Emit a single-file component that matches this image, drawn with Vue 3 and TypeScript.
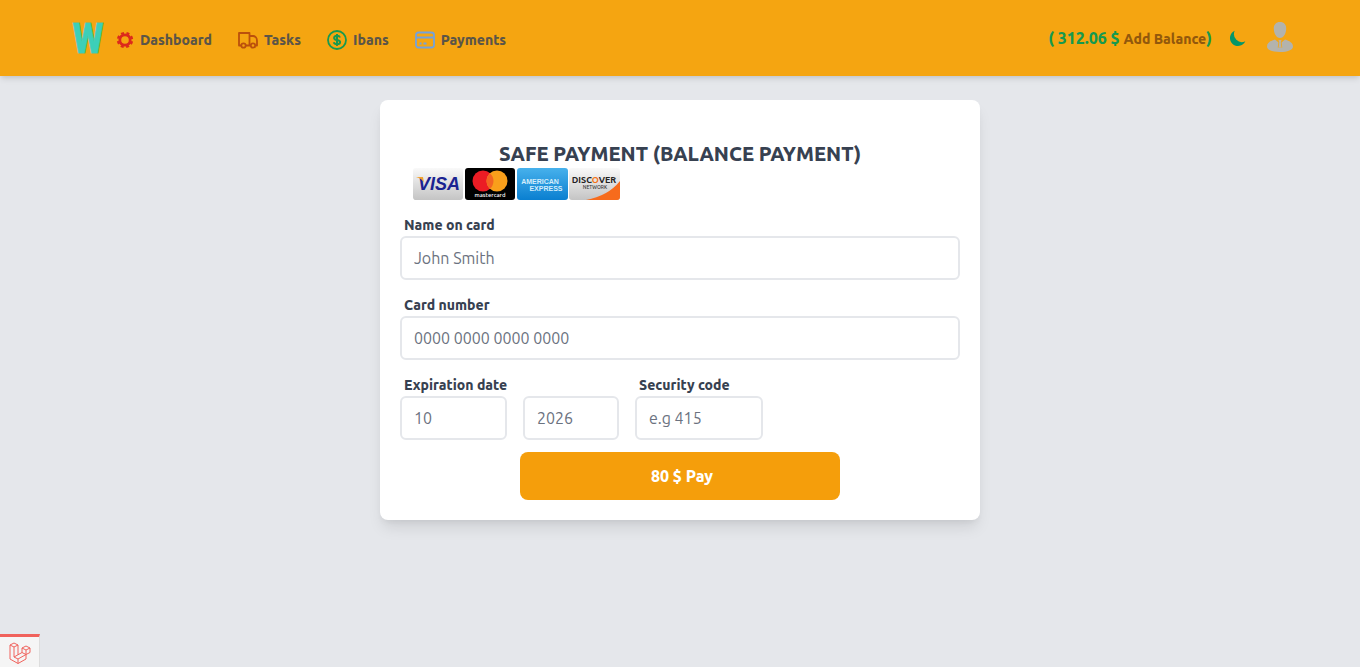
<script setup lang="ts">
import { ref } from 'vue'

const cardName = ref('')
const cardNumber = ref('')
const month = ref('')
const year = ref('')
const code = ref('')
</script>

<template>
  <div class="page">
    <header class="bar">
      <nav class="nav">
        <a href="#" class="logo" aria-label="Home">
          <svg width="32" height="52" viewBox="0 0 32 52">
            <text x="16" y="39" text-anchor="middle">W</text>
          </svg>
        </a>
        <a href="#" class="item">
          <svg width="18" height="18" viewBox="0 0 18 18" fill="none" stroke="#dc2a1c">
            <circle cx="9" cy="9" r="5.2" stroke-width="2.8" />
            <circle cx="9" cy="9" r="7.1" stroke-width="2.2" stroke-dasharray="3 2.576" stroke-dashoffset="-1.3" />
          </svg>
          <span>Dashboard</span>
        </a>
        <a href="#" class="item">
          <svg width="20" height="20" viewBox="0 0 20 20" fill="none" stroke="#bb500c" stroke-width="1.8" stroke-linejoin="round">
            <path d="M3.200 15.500H1V3h10.500v12.500H8M11.500 6h3.700c2.400 0 3.800 2.500 3.800 5v4.500h-1.500M12.700 15.500H11.500" />
            <circle cx="5.500" cy="15.500" r="2.200" />
            <circle cx="15" cy="15.500" r="2.200" />
          </svg>
          <span>Tasks</span>
        </a>
        <a href="#" class="item">
          <svg width="20" height="20" viewBox="0 0 20 20" fill="none" stroke="#16994f">
            <circle cx="10" cy="10" r="9" stroke-width="1.800" />
            <path d="M13 7.500C12.500 6.200 11.400 5.800 10 5.800c-1.700 0-2.900.8-2.900 2.100 0 3 6 1.300 6 4.200 0 1.400-1.300 2.200-3.100 2.200-1.600 0-2.800-.6-3.200-2M10 4v12" stroke-width="2" />
          </svg>
          <span>Ibans</span>
        </a>
        <a href="#" class="item">
          <svg width="20" height="20" viewBox="0 0 20 20" fill="none" stroke="#74a2dc" stroke-width="1.800">
            <rect x="1" y="2.500" width="18" height="15" rx="2.500" />
            <path d="M1 7.500h18M4.500 13.500h2M8.500 13.500h3" stroke-width="2" />
          </svg>
          <span>Payments</span>
        </a>
      </nav>
      <div class="account">
        <span class="balance">( 312.06 $ <a href="#">Add Balance</a>)</span>
        <button type="button" class="plain" aria-label="Dark mode">
          <svg width="18" height="18" viewBox="1 1 18 18" fill="#059669">
            <path d="M17.293 13.293A8 8 0 016.707 2.707a8.001 8.001 0 1010.586 10.586z" />
          </svg>
        </button>
        <button type="button" class="plain" aria-label="Profile">
          <svg width="26" height="32" viewBox="0 0 26 32" fill="#b3b3ad">
            <path d="M13 0c4 0 6.500 2.700 6.200 7-.2 4.200-2.300 9-6.200 9s-6-4.800-6.200-9C6.500 2.700 9 0 13 0z" />
            <path d="M8 17.500l3.500 3-.8 5h4.600l-.8-5 3.500-3c4.500 1.300 8 3.500 8 7 0 3.600-5.500 5.500-13 5.500S0 28.100 0 24.500c0-3.500 3.500-5.700 8-7z" />
            <path d="M11.500 18h3l-.7 2.500.7 5h-3l.7-5z" />
          </svg>
        </button>
      </div>
    </header>

    <main>
      <form class="card" @submit.prevent>
        <h1>SAFE PAYMENT (BALANCE PAYMENT)</h1>
        <svg class="brands" width="208" height="32" viewBox="0 0 208 32" role="img" aria-label="Accepted cards">
          <defs>
            <linearGradient id="silver" x1="0" y1="0" x2="0" y2="1">
              <stop offset="0" stop-color="#f9f9f9" /><stop offset="1" stop-color="#c4c4c4" />
            </linearGradient>
            <linearGradient id="blue" x1="0" y1="0" x2="0" y2="1">
              <stop offset="0" stop-color="#47b1ec" /><stop offset="1" stop-color="#0a7fd0" />
            </linearGradient>
            <clipPath id="last"><rect x="157" width="51" height="32" rx="3" /></clipPath>
          </defs>
          <rect x="1" width="50" height="32" rx="3" fill="url(#silver)" />
          <text class="visa" x="27" y="22" text-anchor="middle">VISA</text>
          <path d="M4 9h7l1 6c-1-3-4-5-8-6z" fill="#f2a330" />
          <rect x="53" width="50" height="32" rx="3" fill="#000" />
          <circle cx="71" cy="13" r="10.500" fill="#eb1c24" />
          <circle cx="85" cy="13" r="10.500" fill="#f99f1b" />
          <path d="M78 5.200a10.500 10.500 0 010 15.600 10.500 10.500 0 010-15.600z" fill="#f26522" />
          <text class="mc" x="78" y="29" text-anchor="middle">mastercard</text>
          <rect x="105" width="51" height="32" rx="3" fill="url(#blue)" />
          <text class="amex" x="128" y="16" text-anchor="middle">AMERICAN</text>
          <text class="amex" x="134" y="23" text-anchor="middle">EXPRESS</text>
          <rect x="157" width="51" height="32" rx="3" fill="url(#silver)" />
          <path d="M174 32q22-4 34-19v19z" fill="#f76b1c" clip-path="url(#last)" />
          <text class="disc" x="182" y="15" text-anchor="middle">DISC<tspan fill="#f47216">O</tspan>VER</text>
          <text class="net" x="183" y="21" text-anchor="middle">NETWORK</text>
        </svg>

        <div class="field">
          <label for="name">Name on card</label>
          <input id="name" v-model="cardName" type="text" placeholder="John Smith" />
        </div>
        <div class="field">
          <label for="number">Card number</label>
          <input id="number" v-model="cardNumber" type="text" placeholder="0000 0000 0000 0000" />
        </div>
        <div class="row">
          <div class="field month">
            <label for="month">Expiration date</label>
            <input id="month" v-model="month" type="text" placeholder="10" />
          </div>
          <div class="field year">
            <input id="year" v-model="year" type="text" placeholder="2026" aria-label="Expiration year" />
          </div>
          <div class="field code">
            <label for="code">Security code</label>
            <input id="code" v-model="code" type="text" placeholder="e.g 415" />
          </div>
        </div>
        <button type="submit" class="pay">80 $ Pay</button>
      </form>
    </main>

    <button type="button" class="debug" aria-label="Debug bar">
      <svg width="22" height="22" viewBox="0 0 22 22" fill="none" stroke="#f0625c" stroke-width="1" stroke-linejoin="round">
        <path d="M1 3l4-2 4 2-4 2zM1 3v14l8 4.500 8-4.500v-4.500l4-2V6l-4-2-4 2v4.500l-8 4.500V5M9 3v9.700M13 6l4 2 4-2M17 8v4.500l-4-2M17 12.500L9 17l-4-2M9 17v4.500" />
      </svg>
    </button>
  </div>
</template>

<style>
body {
  background: #e5e7eb;
}
</style>

<style scoped>
.page {
  font-family: Ubuntu, "Noto Sans", sans-serif;
  font-size: 16px;
  line-height: 24px;
  color: #374151;
}
.page * {
  box-sizing: border-box;
}
.bar {
  display: flex;
  justify-content: space-between;
  align-items: center;
  height: 76px;
  padding: 0 67px 0 72px;
  background: #f5a511;
  box-shadow: 0 4px 6px -1px rgba(0, 0, 0, 0.1), 0 2px 4px -1px rgba(0, 0, 0, 0.06);
}
.nav,
.item,
.account {
  display: flex;
  align-items: center;
}
.nav {
  gap: 26px;
  padding-top: 4px;
}
.logo {
  display: flex;
  margin-right: -14px;
}
.logo text {
  font-family: "Liberation Sans Narrow", "Roboto Condensed", "DejaVu Sans Condensed", sans-serif;
  font-size: 42px;
  line-height: 48px;
  font-weight: 700;
  fill: #3ccfb8;
  stroke: #5fbf94;
  stroke-width: 1px;
  paint-order: stroke;
}
.item {
  gap: 6px;
  font-size: 14px;
  font-weight: 800;
  color: #5b5548;
  text-decoration: none;
}
.balance {
  white-space: pre;
  font-weight: 800;
  color: #16994f;
  margin-right: 17px;
}
.balance a {
  font-size: 14px;
  font-weight: 800;
  color: #92580c;
  text-decoration: none;
}
.plain {
  display: flex;
  padding: 0;
  border: 0;
  background: none;
}
.plain + .plain {
  margin-left: 20px;
}
main {
  padding: 24px 20px;
}
.card {
  max-width: 600px;
  margin: 0 auto;
  padding: 40px 20px 20px;
  background: #fff;
  border-radius: 8px;
  box-shadow: 0 10px 15px -3px rgba(0, 0, 0, 0.1), 0 4px 6px -2px rgba(0, 0, 0, 0.05);
}
h1 {
  margin: 0;
  font-size: 20px;
  line-height: 28px;
  font-weight: 800;
  text-align: center;
}
.brands {
  display: block;
  margin: 0 0 12px 12px;
}
.visa {
  font: italic 700 18px "Liberation Sans", sans-serif;
  fill: #1a2391;
}
.mc {
  font: 500 6px Ubuntu, "Open Sans", sans-serif;
  fill: #fff;
}
.amex {
  font: 700 7px "Liberation Sans", sans-serif;
  fill: #d3edfc;
}
.disc {
  font: 700 9px Ubuntu, "Open Sans", sans-serif;
  fill: #222;
}
.net {
  font: 500 5px Ubuntu, "Open Sans", sans-serif;
  fill: #333;
}
.field {
  display: flex;
  flex-direction: column;
  justify-content: flex-end;
  margin-bottom: 12px;
}
label {
  padding: 2px 0 0 4px;
  font-size: 14px;
  line-height: 22px;
  font-weight: 800;
  white-space: nowrap;
}
input {
  width: 100%;
  height: 44px;
  padding: 0 12px;
  border: 2px solid #e5e7eb;
  border-radius: 6px;
  background: #fff;
  font: inherit;
  color: #374151;
}
input::placeholder {
  color: #6b7280;
  opacity: 1;
}
.row {
  display: flex;
  gap: 16px;
}
.month {
  width: 107px;
}
.year {
  width: 96px;
}
.code {
  width: 128px;
}
.pay {
  display: block;
  width: 100%;
  max-width: 320px;
  height: 48px;
  margin: 0 auto;
  padding: 0 0 0 4px;
  border: 0;
  border-radius: 8px;
  background: #f59e0b;
  font: inherit;
  font-weight: 800;
  color: #fff;
}
.debug {
  position: fixed;
  left: 0;
  bottom: 0;
  display: flex;
  justify-content: center;
  align-items: center;
  width: 40px;
  height: 33px;
  padding: 2px 0 0;
  border: solid #ddd;
  border-width: 3px 1px 0 0;
  border-top-color: #f0625c;
  background: #f5f5f5;
}
</style>
